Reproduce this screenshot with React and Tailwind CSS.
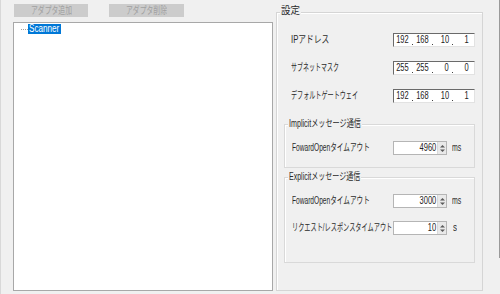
import React, { useLayoutEffect, useRef, useState } from "react";

// squeezes a label to the width it has in the screenshot (MS UI Gothic is narrow)
function Fit({ w, children, className = "", origin = "left" }) {
  const ref = useRef(null);
  const [s, setS] = useState(1);

  useLayoutEffect(() => {
    const n = ref.current.offsetWidth;
    if (n) setS(w / n);
  }, [w, children]);

  return (
    <span className={`inline-flex shrink-0 ${className}`} style={{ width: w }}>
      <span
        ref={ref}
        className={`inline-block whitespace-nowrap ${origin === "center" ? "origin-center" : "origin-left"}`}
        style={{ transform: `scaleX(${s})` }}
      >
        {children}
      </span>
    </span>
  );
}

function Num({ children }) {
  return (
    <span className="inline-block whitespace-nowrap origin-right scale-x-[0.75]">
      {children}
    </span>
  );
}

function Spinner() {
  return (
    <div className="w-[9px] h-full bg-[#e9e9e9] border-l border-[#d9d9d9] flex items-center justify-center">
      <svg width="7" height="11" viewBox="0 0 7 11">
        <polygon points="1,4.5 3.5,2 6,4.5" fill="#5a5a5a" />
        <polygon points="1,6.5 3.5,9 6,6.5" fill="#5a5a5a" />
      </svg>
    </div>
  );
}

function NumField({ value }) {
  return (
    <div className="w-[54px] h-[14px] bg-white border border-[#b5b5b5] flex">
      <div className="flex-1 flex items-center justify-end pr-[1px] text-[#222]">
        <Num>{value}</Num>
      </div>
      <Spinner />
    </div>
  );
}

function IpField({ parts }) {
  return (
    <div className="w-[82px] h-[14px] bg-white border border-t-[#6a6a6a] border-l-[#6a6a6a] border-r-[#e2e2e2] border-b-[#e2e2e2] flex items-center pl-[1px] text-[#222]">
      {parts.map((p, i) => (
        <React.Fragment key={i}>
          <span className="w-[14px] flex justify-end">
            <Num>{p}</Num>
          </span>
          {i < parts.length - 1 && (
            <span className="w-[6px] h-full flex items-end justify-center pb-[1px]">
              <span className="w-px h-px bg-[#444]" />
            </span>
          )}
        </React.Fragment>
      ))}
    </div>
  );
}

function GroupTitle({ w, children, top = "-mt-[7px]" }) {
  return (
    <div className={`${top} ml-[3px] self-start h-[12px] leading-[12px] px-[1px] bg-[#f0f0f0]`}>
      <Fit w={w}>{children}</Fit>
    </div>
  );
}

export default function App() {
  return (
    <div className="w-[500px] h-[294px] bg-[#f0f0f0] flex overflow-hidden border-l border-[#d8d8d8] font-['Liberation_Sans','Noto_Sans_CJK_JP',sans-serif] text-[10px] leading-[12px] text-[#2a2a2a]">
      {/* tree side */}
      <div className="ml-[12px] w-[260px] flex flex-col pt-[4px]">
        <div className="flex gap-[21px] pl-[1px]">
          <button className="w-[74px] h-[13px] bg-[#cccccc] text-[#a0a0a0] flex items-center justify-center">
            <Fit w={41}>アダプタ追加</Fit>
          </button>
          <button className="w-[75px] h-[13px] bg-[#cccccc] text-[#a0a0a0] flex items-center justify-center">
            <Fit w={41}>アダプタ削除</Fit>
          </button>
        </div>
        <div className="mt-[5px] h-[269px] bg-white border border-[#a8a8a8]">
          <div className="mt-[1px] pl-[7px] flex items-center h-[10px]">
            <span className="w-[7px] border-t border-dotted border-[#a0a0a0]" />
            <span className="h-[10px] w-[33px] bg-[#0078d7] text-white flex items-center pl-[1px] leading-[10px]">
              <Fit w={30}>Scanner</Fit>
            </span>
          </div>
        </div>
      </div>

      {/* settings */}
      <div className="ml-[3px] mt-[12px] w-[207px] h-[279px] border border-[#d5d5d5] shadow-[inset_1px_1px_0_#ffffff] flex flex-col">
        <GroupTitle w={19} top="-mt-[8px]">設定</GroupTitle>

        <div className="mt-[16px] ml-[14px] flex flex-col gap-[14px]">
          <div className="h-[14px] flex items-center">
            <span className="w-[102px]"><Fit w={38}>IPアドレス</Fit></span>
            <IpField parts={["192", "168", "10", "1"]} />
          </div>
          <div className="h-[14px] flex items-center">
            <span className="w-[102px]"><Fit w={48}>サブネットマスク</Fit></span>
            <IpField parts={["255", "255", "0", "0"]} />
          </div>
          <div className="h-[14px] flex items-center">
            <span className="w-[102px]"><Fit w={67}>デフォルトゲートウェイ</Fit></span>
            <IpField parts={["192", "168", "10", "1"]} />
          </div>
        </div>

        <div className="mt-[21px] mx-[7px] h-[44px] border border-[#d9d9d9] shadow-[inset_1px_1px_0_#ffffff] flex flex-col">
          <GroupTitle w={72}>Implicitメッセージ通信</GroupTitle>
          <div className="mt-[11px] pl-[7px] h-[14px] flex items-center">
            <span className="w-[101px]"><Fit w={78}>FowardOpenタイムアウト</Fit></span>
            <NumField value="4960" />
            <span className="ml-[5px]"><Fit w={9}>ms</Fit></span>
          </div>
        </div>

        <div className="mt-[9px] mx-[7px] h-[86px] border border-[#d9d9d9] shadow-[inset_1px_1px_0_#ffffff] flex flex-col">
          <GroupTitle w={71}>Explicitメッセージ通信</GroupTitle>
          <div className="mt-[11px] pl-[7px] h-[14px] flex items-center">
            <span className="w-[101px]"><Fit w={78}>FowardOpenタイムアウト</Fit></span>
            <NumField value="3000" />
            <span className="ml-[5px]"><Fit w={9}>ms</Fit></span>
          </div>
          <div className="mt-[13px] pl-[7px] h-[14px] flex items-center">
            <span className="w-[101px]"><Fit w={100}>リクエスト/レスポンスタイムアウト</Fit></span>
            <NumField value="10" />
            <span className="ml-[6px]"><Fit w={4}>s</Fit></span>
          </div>
        </div>
      </div>

      <div className="ml-auto w-px h-[258px] bg-[#9a9a9a]" />
    </div>
  );
}
